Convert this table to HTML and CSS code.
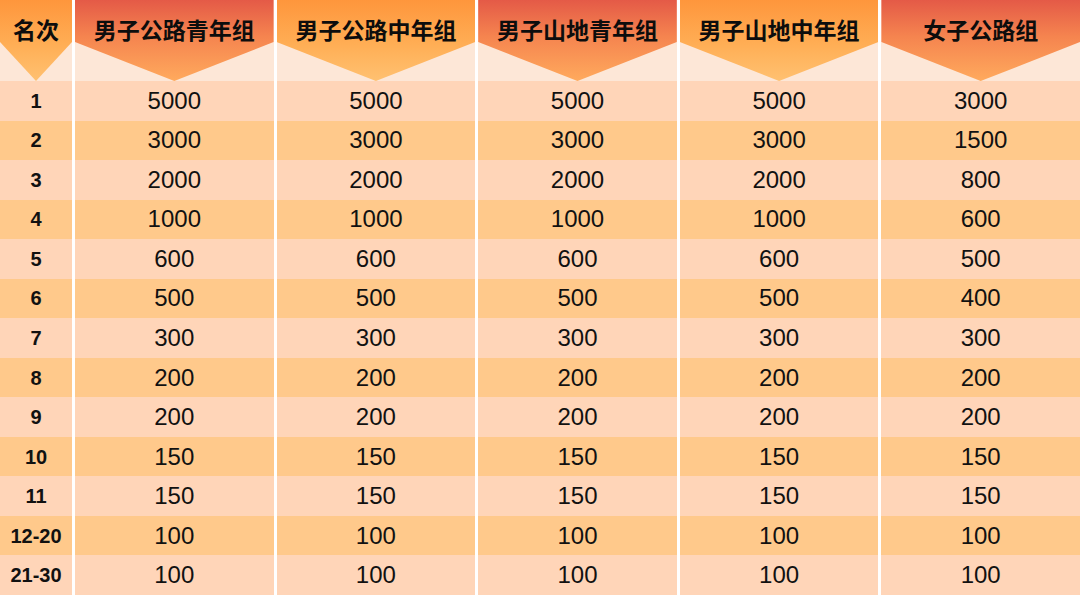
FILE: index.html
```html
<!DOCTYPE html>
<html lang="zh">
<head>
<meta charset="utf-8">
<title>奖金表</title>
<link rel="stylesheet" href="styles.css">
</head>
<body>
<div class="table">
  <div class="hcell"><div class="shape orange"><span>名次</span></div></div>
  <div class="hcell"><div class="shape red"><span>男子公路青年组</span></div></div>
  <div class="hcell"><div class="shape orange"><span>男子公路中年组</span></div></div>
  <div class="hcell"><div class="shape red"><span>男子山地青年组</span></div></div>
  <div class="hcell"><div class="shape orange"><span>男子山地中年组</span></div></div>
  <div class="hcell"><div class="shape red"><span>女子公路组</span></div></div>

  <div class="cell rank a">1</div><div class="cell a">5000</div><div class="cell a">5000</div><div class="cell a">5000</div><div class="cell a">5000</div><div class="cell a">3000</div>
  <div class="cell rank b">2</div><div class="cell b">3000</div><div class="cell b">3000</div><div class="cell b">3000</div><div class="cell b">3000</div><div class="cell b">1500</div>
  <div class="cell rank a">3</div><div class="cell a">2000</div><div class="cell a">2000</div><div class="cell a">2000</div><div class="cell a">2000</div><div class="cell a">800</div>
  <div class="cell rank b">4</div><div class="cell b">1000</div><div class="cell b">1000</div><div class="cell b">1000</div><div class="cell b">1000</div><div class="cell b">600</div>
  <div class="cell rank a">5</div><div class="cell a">600</div><div class="cell a">600</div><div class="cell a">600</div><div class="cell a">600</div><div class="cell a">500</div>
  <div class="cell rank b">6</div><div class="cell b">500</div><div class="cell b">500</div><div class="cell b">500</div><div class="cell b">500</div><div class="cell b">400</div>
  <div class="cell rank a">7</div><div class="cell a">300</div><div class="cell a">300</div><div class="cell a">300</div><div class="cell a">300</div><div class="cell a">300</div>
  <div class="cell rank b">8</div><div class="cell b">200</div><div class="cell b">200</div><div class="cell b">200</div><div class="cell b">200</div><div class="cell b">200</div>
  <div class="cell rank a">9</div><div class="cell a">200</div><div class="cell a">200</div><div class="cell a">200</div><div class="cell a">200</div><div class="cell a">200</div>
  <div class="cell rank b">10</div><div class="cell b">150</div><div class="cell b">150</div><div class="cell b">150</div><div class="cell b">150</div><div class="cell b">150</div>
  <div class="cell rank a">11</div><div class="cell a">150</div><div class="cell a">150</div><div class="cell a">150</div><div class="cell a">150</div><div class="cell a">150</div>
  <div class="cell rank b">12-20</div><div class="cell b">100</div><div class="cell b">100</div><div class="cell b">100</div><div class="cell b">100</div><div class="cell b">100</div>
  <div class="cell rank a">21-30</div><div class="cell a">100</div><div class="cell a">100</div><div class="cell a">100</div><div class="cell a">100</div><div class="cell a">100</div>
</div>
</body>
</html>
```

FILE: styles.css
```css
html, body {
  margin: 0;
  padding: 0;
  background: #ffffff;
}

.table {
  width: 1080px;
  height: 595px;
  display: grid;
  grid-template-columns: 72px repeat(5, 1fr);
  grid-template-rows: 81px repeat(13, 1fr);
  column-gap: 3px;
  background: #ffffff;
  font-family: "Liberation Sans", Arial, sans-serif;
  color: #111111;
}

.hcell {
  background: #fde7d7;
  position: relative;
}

.shape {
  width: 100%;
  height: 100%;
  clip-path: polygon(0 0, 100% 0, 100% 52%, 50% 100%, 0 52%);
  display: flex;
  justify-content: center;
  align-items: flex-start;
}

.shape span {
  margin-top: 13px;
  font-family: "Noto Sans CJK SC", "Noto Sans", sans-serif;
  font-weight: 700;
  font-size: 23px;
  line-height: 32px;
  color: #0d0d0d;
  white-space: nowrap;
}

.orange {
  background: linear-gradient(to bottom, #fe963c 0%, #ffae55 55%, #ffc171 100%);
}

.red {
  background: linear-gradient(to bottom, #e45a47 0%, #f5844f 45%, #ffaa5d 100%);
}

.cell {
  display: flex;
  align-items: center;
  justify-content: center;
  font-size: 24px;
  line-height: 1;
}

.rank {
  font-weight: 700;
  font-size: 20px;
}

.a {
  background: #ffd5b8;
}

.b {
  background: #ffc98b;
}
```
